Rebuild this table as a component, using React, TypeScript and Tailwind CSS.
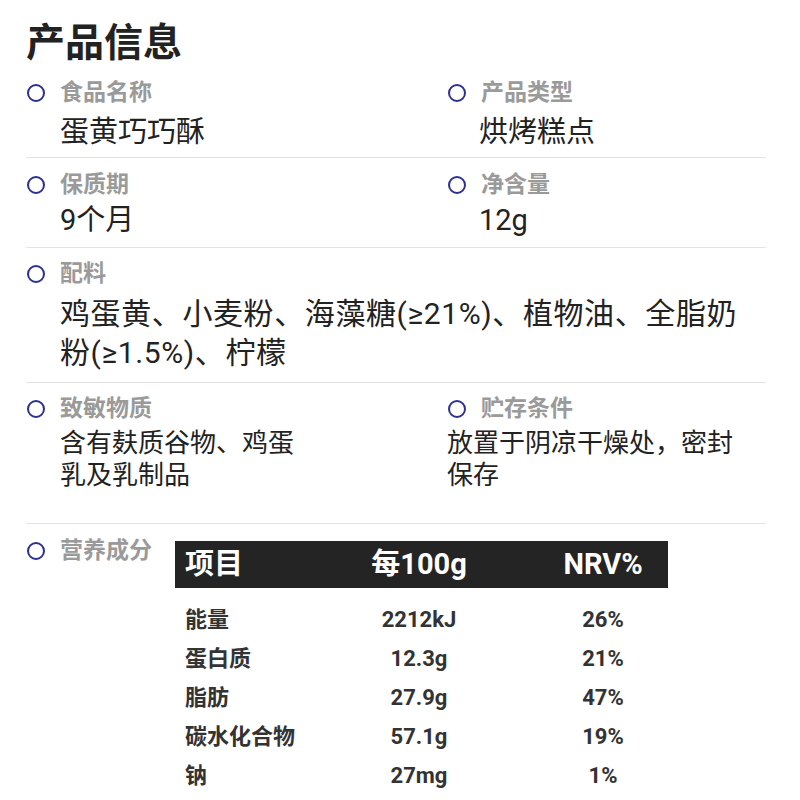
import React from "react";

const font = { fontFamily: '"Roboto", "Noto Sans CJK SC", sans-serif' };

function Label({ text }: { text: string }) {
  return (
    <div className="flex items-center h-[20px]">
      <span className="w-[18px] h-[18px] rounded-full border-2 border-[#2e3192] ml-[1px] shrink-0" />
      <span className="ml-[15px] text-[23px] leading-[20px] font-bold text-[#9a9a9a] whitespace-nowrap">{text}</span>
    </div>
  );
}

function Cell({ label, children, valueClass }: { label: string; children: React.ReactNode; valueClass: string }) {
  return (
    <div>
      <Label text={label} />
      <div className={"text-[#222] whitespace-nowrap " + valueClass}>{children}</div>
    </div>
  );
}

const rows = [
  ["能量", "2212kJ", "26%"],
  ["蛋白质", "12.3g", "21%"],
  ["脂肪", "27.9g", "47%"],
  ["碳水化合物", "57.1g", "19%"],
  ["钠", "27mg", "1%"],
];

export default function App() {
  return (
    <div className="w-[800px] h-[800px] bg-white overflow-hidden pl-[26px] pr-[34px]" style={font}>
      <div className="pt-[23px] text-[39px] leading-[40px] font-bold text-[#222]">产品信息</div>

      <div className="grid grid-cols-[421px_1fr] border-b border-[#e3e3e3] pt-[20px] pb-[6px]">
        <Cell label="食品名称" valueClass="pl-[34px] mt-[10px] text-[29px] leading-[38px]">蛋黄巧巧酥</Cell>
        <Cell label="产品类型" valueClass="pl-[32px] mt-[10px] text-[29px] leading-[38px]">烘烤糕点</Cell>
      </div>

      <div className="grid grid-cols-[421px_1fr] border-b border-[#e3e3e3] pt-[17px] pb-[8px]">
        <Cell label="保质期" valueClass="pl-[34px] mt-[6px] text-[29px] leading-[38px]">9个月</Cell>
        <Cell label="净含量" valueClass="pl-[32px] mt-[6px] text-[29px] leading-[38px]">12g</Cell>
      </div>

      <div className="border-b border-[#e3e3e3] pt-[16px] pb-[10px]">
        <Cell label="配料" valueClass="pl-[34px] mt-[10px] text-[30px] leading-[39px] tracking-[0.6px]">
          鸡蛋黄、小麦粉、海藻糖(≥21%)、植物油、全脂奶
          <br />
          粉(≥1.5%)、柠檬
        </Cell>
      </div>

      <div className="grid grid-cols-[421px_1fr] border-b border-[#e3e3e3] pt-[16px] pb-[32px]">
        <Cell label="致敏物质" valueClass="pl-[34px] mt-[8px] text-[26px] leading-[32px]">
          含有麸质谷物、鸡蛋
          <br />
          乳及乳制品
        </Cell>
        <Cell label="贮存条件" valueClass="pl-0 mt-[8px] text-[26px] leading-[32px]">
          放置于阴凉干燥处，密封
          <br />
          保存
        </Cell>
      </div>

      <div className="flex pt-[17px]">
        <div className="w-[149px] shrink-0">
          <Label text="营养成分" />
        </div>
        <div className="w-[493px]">
          <div className="grid grid-cols-[169px_150px_174px] h-[47px] items-center bg-[#242424] text-white text-[29px] font-bold">
            <div className="pl-[10px]">项目</div>
            <div className="text-center">每100g</div>
            <div className="text-center pl-[44px]">NRV%</div>
          </div>
          <div className="pt-[12px]">
            {rows.map((r) => (
              <div key={r[0]} className="grid grid-cols-[169px_150px_174px] h-[39px] items-center text-[22px] font-bold text-[#333]">
                <div className="pl-[10px]">{r[0]}</div>
                <div className="text-center">{r[1]}</div>
                <div className="text-center pl-[44px]">{r[2]}</div>
              </div>
            ))}
          </div>
        </div>
      </div>
    </div>
  );
}
